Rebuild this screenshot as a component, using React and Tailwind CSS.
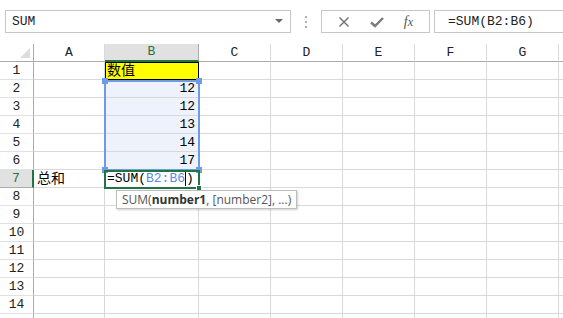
import React from "react";

const cols = [
  { k: "A", w: "w-[71px]" },
  { k: "B", w: "w-[94px]" },
  { k: "C", w: "w-[72px]" },
  { k: "D", w: "w-[72px]" },
  { k: "E", w: "w-[72px]" },
  { k: "F", w: "w-[72px]" },
  { k: "G", w: "w-[72px]" },
  { k: "", w: "w-[72px]" },
];

const data = {
  "B2": "12",
  "B3": "12",
  "B4": "13",
  "B5": "14",
  "B6": "17",
};

function Cell({ col, row }) {
  const key = col.k + row;
  let content = null;
  let cls = "";
  if (key === "B1") {
    cls = "bg-[#ffff00] outline outline-1 outline-black -outline-offset-1";
    content = <span className="pl-[2px] text-[14px] leading-[18px]">数值</span>;
  } else if (key === "A7") {
    content = <span className="pl-[3px] text-[14px] leading-[18px]">总和</span>;
  } else if (data[key]) {
    cls = "bg-[#eef2fc] justify-end";
    content = <span className="pr-[3px]">{data[key]}</span>;
  } else if (key === "B7") {
    content = (
      <span className="pl-[2px] whitespace-nowrap">
        =SUM(<span className="text-[#5b8be0]">B2:B6</span>
        <span className="border-l border-black">)</span>
      </span>
    );
  }
  return (
    <div
      className={`${col.w} shrink-0 h-[18px] border-r border-b border-[#d9d9d9] flex items-center overflow-visible ${cls}`}
    >
      {content}
    </div>
  );
}

export default function App() {
  const rows = Array.from({ length: 15 }, (_, i) => i + 1);
  return (
    <div
      className="w-[563px] h-[318px] overflow-hidden bg-white text-black text-[13px] relative"
      style={{ fontFamily: '"Liberation Mono", "Noto Sans CJK SC", monospace' }}
    >
      {/* Formula bar */}
      <div className="h-[44px] flex items-start pt-[10px]">
        <div className="ml-[5px] w-[286px] h-[23px] border border-[#c6c6c6] flex items-center justify-between pl-[6px] pr-[7px]">
          <span className="text-[#222]">SUM</span>
          <svg width="8" height="5" viewBox="0 0 8 5">
            <path d="M0 0 L8 0 L4 4 Z" fill="#6a6a6a" />
          </svg>
        </div>
        <div className="w-[30px] h-[23px] flex flex-col items-center justify-center gap-[3px]">
          <div className="w-[2px] h-[2px] bg-[#b0b0b0]" />
          <div className="w-[2px] h-[2px] bg-[#b0b0b0]" />
          <div className="w-[2px] h-[2px] bg-[#b0b0b0]" />
        </div>
        <div className="w-[109px] h-[23px] border border-[#c6c6c6] flex items-center justify-around px-[6px]">
          <svg width="12" height="12" viewBox="0 0 12 12">
            <path d="M1.5 1.5 L10.5 10.5 M10.5 1.5 L1.5 10.5" stroke="#6f6f6f" strokeWidth="1.4" />
          </svg>
          <svg width="14" height="12" viewBox="0 0 14 12">
            <path d="M1 6.5 L5 10 L13 2" stroke="#7a7a7a" strokeWidth="2.4" fill="none" />
          </svg>
          <span
            className="italic text-[#555] text-[14px] leading-none"
            style={{ fontFamily: '"Liberation Serif", serif' }}
          >
            f<span className="text-[12px]">x</span>
          </span>
        </div>
        <div className="ml-[4px] flex-1 h-[23px] border border-[#c6c6c6] border-r-0 flex items-center pl-[13px] text-[#222]">
          =SUM(B2:B6)
        </div>
      </div>

      {/* Grid */}
      <div className="relative">
        {/* Header row */}
        <div className="flex h-[18px]">
          <div className="w-[34px] shrink-0 h-[18px] border-r border-b border-[#ababab] relative flex items-end justify-end pr-[3px] pb-[3px]">
            <svg width="10" height="10" viewBox="0 0 10 10">
              <path d="M10 0 L10 10 L0 10 Z" fill="#dcdcdc" />
            </svg>
          </div>
          {cols.map((c, i) => (
            <div
              key={i}
              className={`${c.w} shrink-0 h-[18px] flex items-center justify-center border-r ${
                c.k === "B"
                  ? "bg-[#e1e1e1] text-[#217346] border-b-2 border-b-[#217346] border-r-[#ababab]"
                  : "border-b border-b-[#ababab] border-r-[#d9d9d9] text-[#222]"
              }`}
            >
              {c.k}
            </div>
          ))}
        </div>
        {rows.map((r) => (
          <div key={r} className="flex h-[18px]">
            <div
              className={`w-[34px] shrink-0 h-[18px] border-b flex items-center justify-center ${
                r === 7
                  ? "bg-[#e1e1e1] text-[#217346] border-r-2 border-r-[#217346] border-b-[#ababab]"
                  : "border-r border-r-[#ababab] border-b-[#e1e1e1] text-[#222]"
              }`}
            >
              {r <= 14 ? r : ""}
            </div>
            {cols.map((c, i) => (
              <Cell key={i} col={c} row={r} />
            ))}
          </div>
        ))}

        {/* Range selection B2:B6 */}
        <div className="absolute left-[104px] top-[36px] w-[96px] h-[91px] border-2 border-[#6e9be6] pointer-events-none">
          <div className="absolute -left-[4px] -top-[4px] w-[6px] h-[6px] bg-[#6e9be6]" />
          <div className="absolute -right-[4px] -top-[4px] w-[6px] h-[6px] bg-[#6e9be6]" />
          <div className="absolute -left-[4px] -bottom-[4px] w-[6px] h-[6px] bg-[#6e9be6]" />
          <div className="absolute -right-[4px] -bottom-[4px] w-[6px] h-[6px] bg-[#6e9be6]" />
        </div>

        {/* Active cell B7 */}
        <div className="absolute left-[104px] top-[126px] w-[96px] h-[19px] border-2 border-[#217346] pointer-events-none">
          <div className="absolute -right-[4px] -bottom-[4px] w-[6px] h-[6px] bg-[#217346] border border-white" />
        </div>

        {/* Tooltip */}
        <div
          className="absolute left-[116px] top-[146px] h-[19px] px-[5px] bg-white border border-[#bdbdbd] shadow-[1px_1px_2px_rgba(0,0,0,0.2)] flex items-center text-[12px] text-[#555] whitespace-nowrap"
          style={{ fontFamily: '"Open Sans", "Noto Sans", sans-serif' }}
        >
          SUM(<span className="font-bold text-[#333]">number1</span>, [number2], ...)
        </div>
      </div>
    </div>
  );
}
